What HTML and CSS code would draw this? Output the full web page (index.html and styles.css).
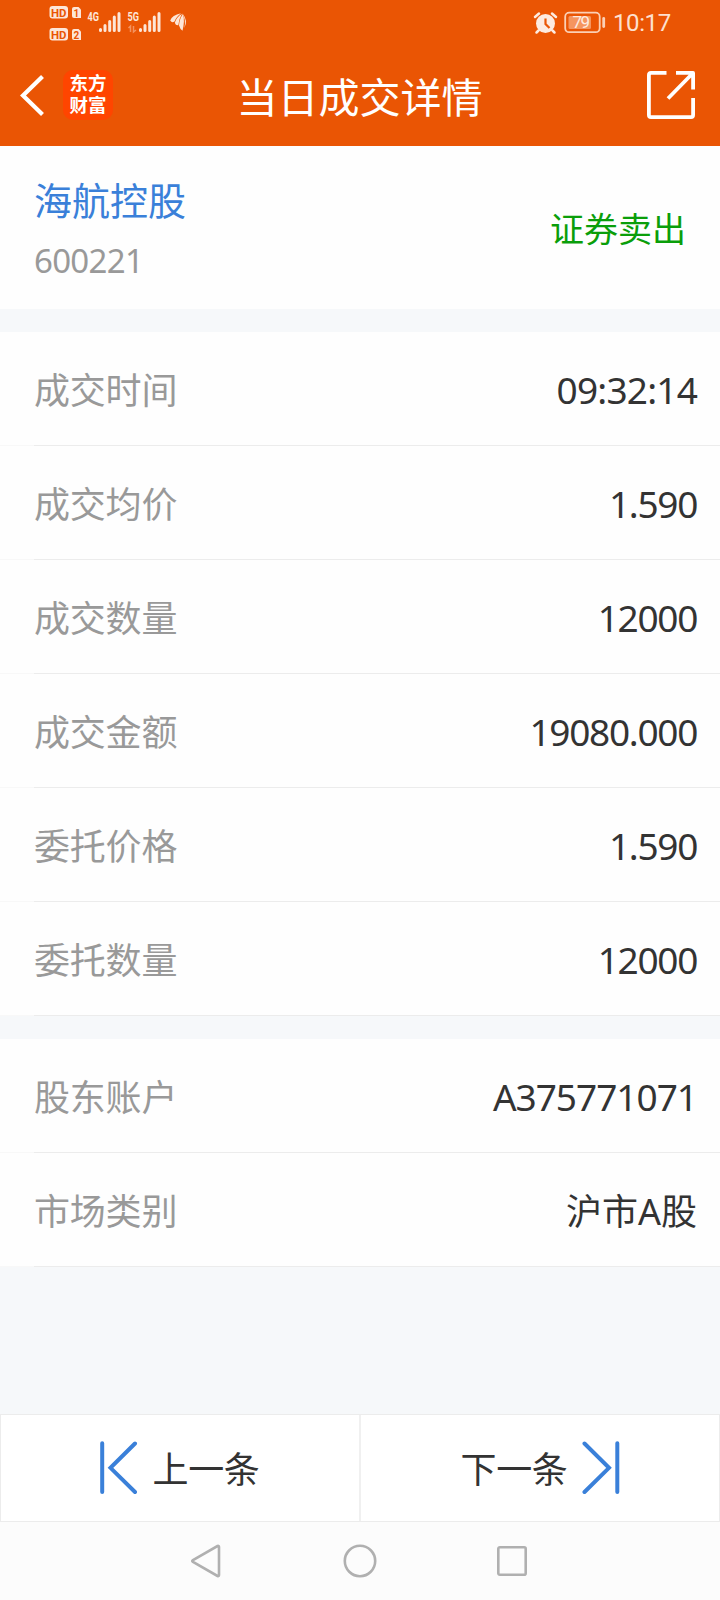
FILE: index.html
```html
<!DOCTYPE html>
<html lang="zh-CN">
<head>
  <meta charset="utf-8">
  <title>当日成交详情</title>
  <link rel="stylesheet" href="styles.css">
</head>
<body>
  <header>
    <div class="status">
      <svg class="status-left" width="150" height="48" viewBox="45 0 150 48">
        <!-- HD badges -->
        <g fill="#fde6d8">
          <rect x="49.5" y="6" width="18.5" height="12.5" rx="3"/>
          <path d="M74 7h4.500l2.500 2.500v8.500h-7q-2 0-2-2v-7q0-2 2-2z"/>
          <rect x="49.500" y="28" width="18.500" height="12.500" rx="3"/>
          <path d="M74 29h4.500l2.500 2.500v8.500h-7q-2 0-2-2v-7q0-2 2-2z"/>
        </g>
        <g class="badge-text">
          <text x="51" y="16.500" textLength="15.500" lengthAdjust="spacingAndGlyphs">HD</text>
          <text x="51" y="38.500" textLength="15.500" lengthAdjust="spacingAndGlyphs">HD</text>
          <text x="73.500" y="16.500" font-size="10">1</text>
          <text x="73.500" y="38.500" font-size="10">2</text>
        </g>
        <g class="net-text">
          <text x="87.500" y="20.500" textLength="11.500" lengthAdjust="spacingAndGlyphs">4G</text>
          <text x="127.500" y="20.500" textLength="11.500" lengthAdjust="spacingAndGlyphs">5G</text>
        </g>
        <!-- signal bars -->
        <g stroke="#fde6d8" stroke-width="3" stroke-linecap="round">
          <path d="M100.500 29.500v1M105 25.500v5M109.700 21.500v9M114.300 17v13.500M119 13.500v17"/>
          <path d="M140.500 29.500v1M145 25.500v5M149.700 21.500v9M154.300 17v13.500M159 13.500v17"/>
        </g>
        <path d="M128.500 28l2-2v6M133.500 26v6l2.500-2" fill="none" stroke="#f4935f" stroke-width="1.500"/>
        <g fill="#fde6d8">
          <path d="M181 13.200Q172 15 170.200 20.500Q172 23.500 174.500 21.500Q176 17 181 13.200z"/>
          <path d="M182 13.700Q176.500 17 174.800 22.800Q175.500 25.500 178.300 25.300Q179 18.500 182 13.700z"/>
          <path d="M183 14Q179.300 19 179 25.500Q180 29 182.500 30.700Q185 21 183 14z"/>
          <path d="M182 13Q186.500 20 184.300 28Q188.500 20.500 182 13z"/>
        </g>
      </svg>
      <div class="status-right">
        <svg width="76" height="24" viewBox="532 11 76 24">
          <circle cx="545.500" cy="23.500" r="9.500" fill="#fdebe0"/>
          <path d="M535 17l4-3.500M556 17l-4-3.500M538.500 30.500l-2 2M552.500 30.500l2 2" stroke="#fdebe0" stroke-width="2.500" stroke-linecap="round"/>
          <path d="M545.500 18.500v5.500l4 4" fill="none" stroke="#ea5504" stroke-width="2.200"/>
          <rect x="565.200" y="12.700" width="34.500" height="19.500" rx="4" fill="none" stroke="#fbd0b5" stroke-width="1.800"/>
          <rect x="568.500" y="16" width="22.500" height="13" rx="1.500" fill="#f5955f"/>
          <path d="M603.700 18.500v8" stroke="#fbd0b5" stroke-width="2.800" stroke-linecap="round"/>
          <text class="battery" x="572.500" y="28" textLength="17.500">79</text>
        </svg>
        <span class="clock">10:17</span>
      </div>
    </div>
    <div class="navbar">
      <div class="nav-left">
        <svg width="26" height="44" viewBox="0 0 26 44">
          <path d="M22.500 3.500L3 22.500L22.500 41.500" fill="none" stroke="#fff" stroke-width="4.200"/>
        </svg>
        <div class="logo">东方<br>财富</div>
      </div>
      <h1>当日成交详情</h1>
      <svg class="share" width="48" height="48" viewBox="0 0 48 48">
        <g fill="none" stroke="#fff" stroke-width="3.800" stroke-linejoin="round">
          <path d="M19.500 1.900H4Q1.900 1.900 1.900 4V44Q1.900 46.100 4 46.100H44Q46.100 46.100 46.100 44V27"/>
          <path d="M29 1.900H46.100V18.500M45.500 2.500L21 27.500"/>
        </g>
      </svg>
    </div>
  </header>

  <main>
    <section class="stock">
      <div>
        <div class="stock-name">海航控股</div>
        <div class="stock-code">600221</div>
      </div>
      <div class="side">证券卖出</div>
    </section>

    <section class="list">
      <div class="row"><span class="label">成交时间</span><span class="value time">09:32:14</span></div>
      <div class="row"><span class="label">成交均价</span><span class="value">1.590</span></div>
      <div class="row"><span class="label">成交数量</span><span class="value">12000</span></div>
      <div class="row"><span class="label">成交金额</span><span class="value">19080.000</span></div>
      <div class="row"><span class="label">委托价格</span><span class="value">1.590</span></div>
      <div class="row"><span class="label">委托数量</span><span class="value">12000</span></div>
    </section>

    <section class="list">
      <div class="row"><span class="label">股东账户</span><span class="value account">A375771071</span></div>
      <div class="row"><span class="label">市场类别</span><span class="value market">沪市A股</span></div>
    </section>
  </main>

  <div class="pager">
    <button class="prev">
      <svg width="38" height="54" viewBox="0 0 38 54">
        <path d="M2.200 2.200V51M35 2.500L10.500 26.800L35 51" fill="none" stroke="#3a80d9" stroke-width="4" stroke-linecap="round"/>
      </svg>
      <span>上一条</span>
    </button>
    <button class="next">
      <span>下一条</span>
      <svg width="38" height="54" viewBox="0 0 38 54">
        <path d="M35.300 2.200V51M2.500 2.500L27 26.800L2.500 51" fill="none" stroke="#3a80d9" stroke-width="4" stroke-linecap="round"/>
      </svg>
    </button>
  </div>

  <footer>
    <svg width="34" height="34" viewBox="0 0 34 34">
      <path d="M26.500 2Q28 1.500 28 3V31Q28 32.500 26.500 32L2 18Q0.500 17 2 16z" fill="none" stroke="#b0b0b0" stroke-width="2.600"/>
    </svg>
    <svg width="34" height="34" viewBox="0 0 34 34">
      <circle cx="17" cy="17" r="15.200" fill="none" stroke="#b0b0b0" stroke-width="2.600"/>
    </svg>
    <svg width="34" height="34" viewBox="0 0 34 34">
      <rect x="3.300" y="3.300" width="27.400" height="27.400" rx="1.500" fill="none" stroke="#b0b0b0" stroke-width="2.600"/>
    </svg>
  </footer>
</body>
</html>
```

FILE: styles.css
```css
* {
  box-sizing: border-box;
}

body {
  margin: 0;
  height: 1600px;
  display: flex;
  flex-direction: column;
  background-color: #f6f8fa;
  font-family: "Noto Sans", "Noto Sans CJK SC", sans-serif;
  color: #333;
}

svg {
  display: block;
  flex: none;
}

header {
  height: 146px;
  background-color: #ea5504;
  color: #fff;
}

.status {
  height: 48px;
  display: flex;
  justify-content: space-between;
  padding: 0 50px 0 45px;
  font-family: Roboto, sans-serif;
}

.badge-text {
  font-size: 11.5px;
  font-weight: bold;
  fill: #ea5504;
}

.net-text {
  font-size: 12px;
  font-weight: bold;
  fill: #fde6d8;
}

.status-right {
  display: flex;
  align-items: flex-start;
  gap: 5px;
  padding-top: 11px;
}

.battery {
  font-size: 17px;
  fill: #fdebe0;
}

.clock {
  width: 57px;
  font-size: 24px;
  line-height: 25px;
  letter-spacing: -0.4px;
  color: #fde0cf;
}

.navbar {
  height: 94px;
  display: grid;
  grid-template-columns: 1fr auto 1fr;
  align-items: center;
  padding: 0 25px 0 20px;
}

.nav-left {
  display: flex;
  align-items: center;
  gap: 17px;
}

.logo {
  width: 50px;
  height: 50px;
  padding-top: 2px;
  border-radius: 10px;
  background-color: #ff4500;
  font-size: 18.5px;
  font-weight: bold;
  line-height: 22px;
  text-align: center;
}

h1 {
  margin: 3px 0 0 4px;
  font-size: 41px;
  font-weight: normal;
  line-height: 60px;
}

.share {
  justify-self: end;
}

.stock {
  height: 163px;
  display: flex;
  justify-content: space-between;
  align-items: center;
  padding: 0 34px;
  background-color: #fefefe;
}

.stock-name {
  padding-top: 5px;
  font-size: 38px;
  line-height: 60px;
  color: #3a80d9;
}

.stock-code {
  padding-top: 1px;
  font-size: 33px;
  line-height: 60px;
  letter-spacing: -0.7px;
  color: #999;
}

.side {
  padding-top: 2px;
  font-size: 34px;
  line-height: 50px;
  color: #0a9e0a;
}

.list {
  margin-top: 23px;
}

.row {
  height: 114px;
  display: flex;
  justify-content: space-between;
  align-items: center;
  padding: 0 23px 0 34px;
  background: linear-gradient(to right, #f8f8f8 34px, #ececec 34px) bottom / 100% 1px no-repeat #fefefe;
}

.label {
  padding-top: 3px;
  font-size: 36px;
  line-height: 50px;
  letter-spacing: -0.2px;
  color: #999;
}

.value {
  padding-top: 1px;
  font-size: 37px;
  line-height: 50px;
  letter-spacing: -1.3px;
}

.value.time {
  letter-spacing: -0.8px;
}

.value.account {
  letter-spacing: -1px;
}

.value.market {
  padding-top: 3px;
  font-size: 36px;
  letter-spacing: 0;
}

.pager {
  margin-top: auto;
  height: 108px;
  display: flex;
  border: 1px solid #ececec;
  background-color: #fff;
}

.pager button {
  display: flex;
  align-items: center;
  justify-content: center;
  gap: 14px;
  padding: 0;
  border: none;
  background: none;
  font-family: inherit;
  font-size: 36px;
  line-height: 50px;
  letter-spacing: -0.3px;
  color: #333;
}

.pager span {
  padding-top: 4px;
}

.pager .prev {
  width: 358px;
}

.pager .next {
  width: 360px;
  border-left: 2px solid #f0f0f0;
}

footer {
  height: 78px;
  display: flex;
  justify-content: center;
  align-items: center;
  gap: 118px;
  background-color: #fcfcfc;
}
```
